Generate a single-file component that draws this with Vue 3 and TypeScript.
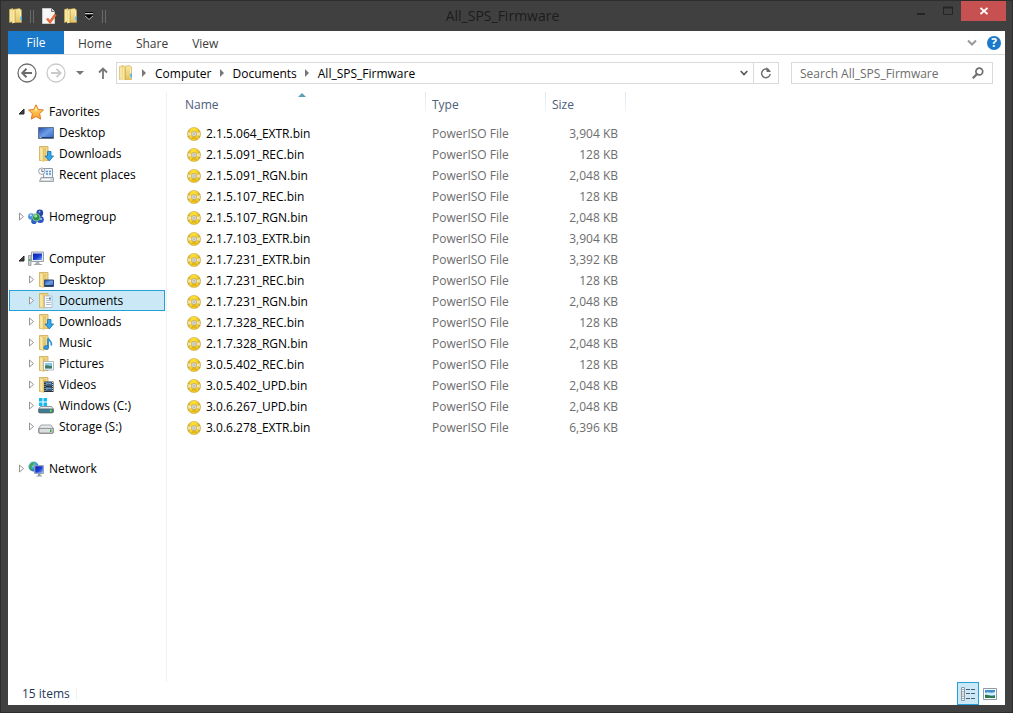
<script setup lang="ts">
import { ref } from 'vue'

interface TreeItem {
  label: string
  icon: string
  expandable?: boolean
}

interface TreeGroup extends TreeItem {
  open: boolean
  children: TreeItem[]
}

interface FileRow {
  name: string
  size: string
}

const tabs: string[] = ['Home', 'Share', 'View']
const crumbs: string[] = ['Computer', 'Documents', 'All_SPS_Firmware']

const groups = ref<TreeGroup[]>([
  {
    label: 'Favorites',
    icon: 'star',
    open: true,
    children: [
      { label: 'Desktop', icon: 'desktop' },
      { label: 'Downloads', icon: 'downloads' },
      { label: 'Recent places', icon: 'recent' },
    ],
  },
  { label: 'Homegroup', icon: 'homegroup', open: false, children: [] },
  {
    label: 'Computer',
    icon: 'computer',
    open: true,
    children: [
      { label: 'Desktop', icon: 'folder-desktop', expandable: true },
      { label: 'Documents', icon: 'documents', expandable: true },
      { label: 'Downloads', icon: 'downloads', expandable: true },
      { label: 'Music', icon: 'music', expandable: true },
      { label: 'Pictures', icon: 'pictures', expandable: true },
      { label: 'Videos', icon: 'videos', expandable: true },
      { label: 'Windows (C:)', icon: 'drive-windows', expandable: true },
      { label: 'Storage (S:)', icon: 'drive', expandable: true },
    ],
  },
  { label: 'Network', icon: 'network', open: false, children: [] },
])

const selected = ref('Documents')
const search = ref('')

const files: FileRow[] = [
  { name: '2.1.5.064_EXTR.bin', size: '3,904 KB' },
  { name: '2.1.5.091_REC.bin', size: '128 KB' },
  { name: '2.1.5.091_RGN.bin', size: '2,048 KB' },
  { name: '2.1.5.107_REC.bin', size: '128 KB' },
  { name: '2.1.5.107_RGN.bin', size: '2,048 KB' },
  { name: '2.1.7.103_EXTR.bin', size: '3,904 KB' },
  { name: '2.1.7.231_EXTR.bin', size: '3,392 KB' },
  { name: '2.1.7.231_REC.bin', size: '128 KB' },
  { name: '2.1.7.231_RGN.bin', size: '2,048 KB' },
  { name: '2.1.7.328_REC.bin', size: '128 KB' },
  { name: '2.1.7.328_RGN.bin', size: '2,048 KB' },
  { name: '3.0.5.402_REC.bin', size: '128 KB' },
  { name: '3.0.5.402_UPD.bin', size: '2,048 KB' },
  { name: '3.0.6.267_UPD.bin', size: '2,048 KB' },
  { name: '3.0.6.278_EXTR.bin', size: '6,396 KB' },
]
</script>

<template>
  <div class="window">
    <svg class="defs" width="0" height="0" aria-hidden="true">
      <defs>
        <linearGradient id="g-folder" x1="0" y1="0" x2="1" y2="0">
          <stop offset="0" stop-color="#e9cd74" />
          <stop offset="0.4" stop-color="#faeeb4" />
          <stop offset="1" stop-color="#ecd27c" />
        </linearGradient>
        <linearGradient id="g-front" x1="0" y1="0" x2="0" y2="1">
          <stop offset="0" stop-color="#f8e9a6" />
          <stop offset="1" stop-color="#e4c463" />
        </linearGradient>
        <linearGradient id="g-screen" x1="0" y1="0" x2="1" y2="1">
          <stop offset="0" stop-color="#1f49a8" />
          <stop offset="0.5" stop-color="#6d9fe6" />
          <stop offset="1" stop-color="#2a62c4" />
        </linearGradient>
        <linearGradient id="g-deep" x1="0" y1="0" x2="1" y2="1">
          <stop offset="0" stop-color="#0a1fa8" />
          <stop offset="0.55" stop-color="#1c3fd8" />
          <stop offset="1" stop-color="#7fb2f5" />
        </linearGradient>
        <linearGradient id="g-star" x1="0" y1="0" x2="0" y2="1">
          <stop offset="0" stop-color="#ffe978" />
          <stop offset="1" stop-color="#fb9a26" />
        </linearGradient>
        <linearGradient id="g-disc" x1="0" y1="0" x2="1" y2="0">
          <stop offset="0" stop-color="#b8912c" />
          <stop offset="0.22" stop-color="#f3d13a" />
          <stop offset="0.5" stop-color="#ffe22e" />
          <stop offset="0.78" stop-color="#efc92c" />
          <stop offset="1" stop-color="#b8912c" />
        </linearGradient>
        <linearGradient id="g-drive" x1="0" y1="0" x2="0" y2="1">
          <stop offset="0" stop-color="#f4f4f4" />
          <stop offset="1" stop-color="#a4a8aa" />
        </linearGradient>
        <radialGradient id="g-globe" cx="0.35" cy="0.3" r="0.8">
          <stop offset="0" stop-color="#b9e8f5" />
          <stop offset="0.5" stop-color="#3a9fd6" />
          <stop offset="1" stop-color="#135a9c" />
        </radialGradient>
      </defs>
      <symbol id="folder" viewBox="0 0 16 16">
        <path d="M1.500 1.500 5 .5v13l-3.500 1z" fill="#f6e6a0" stroke="#d0ae50" stroke-width="0.6" />
        <path d="M5 1.500 11.500.5 13.500 2v12.500H5z" fill="url(#g-front)" stroke="#c9a548" stroke-width="0.6" />
        <path d="M4 2.500 7 1.500v13L4 15.500z" fill="url(#g-folder)" />
        <path d="M7.300 2v12.500" stroke="#c9a443" stroke-width="0.7" />
        <path d="M12.500 4v9" stroke="#fbf3c8" stroke-width="1" />
        <path d="M12.200 8.500h1.600v4h-1.600z" fill="#4db2ea" />
      </symbol>
      <symbol id="folder-base" viewBox="0 0 16 16">
        <path d="M1.500 .5h8.500v14H1.500z" fill="#f0d88f" stroke="#cba955" stroke-width="0.8" />
        <path d="M1.500 .5 5.500 2v13.500l-4-1.500z" fill="url(#g-folder)" stroke="#d3b159" stroke-width="0.5" />
        <path d="M5.500 2.500 8 1.500v13L5.500 15.500z" fill="#e6c86e" />
      </symbol>
      <symbol id="star" viewBox="0 0 16 16">
        <path d="M8 .8 10.300 5.500l5.200.5-3.900 3.600 1.100 5.500L8 12.500l-4.700 2.600 1.100-5.500L.5 6l5.200-.5z" fill="url(#g-star)" stroke="#e2762a" stroke-width="1" stroke-linejoin="round" />
        <path d="M8 3.200 9.500 6.500H6.300z" fill="#fff6b0" />
      </symbol>
      <symbol id="desktop" viewBox="0 0 16 16">
        <path d="M.5 2.500h15v11H.5z" fill="url(#g-screen)" stroke="#62748f" />
        <path d="M1 12h14v1H1z" fill="#243c68" />
        <path d="M1.500 12h2v1h-2z" fill="#8ecbf5" />
      </symbol>
      <symbol id="downloads" viewBox="0 0 16 16">
        <use href="#folder-base" />
        <path d="M9.500 5.500h3.500v4.500h2.500L11.250 15 7 10h2.500z" fill="#32a7ec" stroke="#166fb3" stroke-width="0.8" />
      </symbol>
      <symbol id="recent" viewBox="0 0 16 16">
        <path d="M5.500 1.500h9v10h-9z" fill="#eef4fa" stroke="#8d9aa6" />
        <path d="M8 4.500h2M11 4.500h2M8 7h2M11 7h2" stroke="#4f90d8" stroke-width="1.500" />
        <path d="M3 10.500h12.500v4H1.500z" fill="#d5dadd" stroke="#88929b" stroke-width="0.8" />
        <path d="M4 12.500h8" stroke="#fff" />
        <circle cx="3.800" cy="4.200" r="3.200" fill="#fafcfd" stroke="#8b969f" stroke-width="0.9" />
        <path d="M3.800 2v2.500h2" fill="none" stroke="#556" stroke-width="0.8" />
      </symbol>
      <symbol id="homegroup" viewBox="0 0 16 16">
        <circle cx="3.300" cy="7.500" r="3.200" fill="#4a90e4" />
        <circle cx="11.800" cy="4" r="3.400" fill="#2446a8" />
        <circle cx="12.300" cy="10.500" r="3.500" fill="#2a55bc" />
        <circle cx="6" cy="12.300" r="2.800" fill="#2c5fc0" />
        <circle cx="8.300" cy="8.300" r="3.700" fill="#279443" stroke="#d8efe0" stroke-width="0.5" />
        <circle cx="7.700" cy="7" r="1.600" fill="#a5e39e" />
        <circle cx="2.800" cy="6.300" r="1.100" fill="#c9e4fc" />
        <circle cx="11.500" cy="2.800" r="1" fill="#8fb4f0" />
        <circle cx="13" cy="10" r="1" fill="#a9cff8" />
      </symbol>
      <symbol id="computer" viewBox="0 0 16 16">
        <path d="M.5 4.500h2.500v10H.5z" fill="#c9ced0" stroke="#8a9296" stroke-width="0.8" />
        <path d="M1 8h1.500v2H1z" fill="#39b54a" />
        <path d="M3.500 1h12v9.500h-12z" fill="#e7eaee" stroke="#98a0ab" />
        <path d="M5 2.500h9v6.500H5z" fill="url(#g-deep)" />
        <path d="M8 11h3l1 2.500H7z" fill="#abb2b7" />
        <path d="M6 13.500h8" stroke="#a1a8ac" />
      </symbol>
      <symbol id="folder-desktop" viewBox="0 0 16 16">
        <use href="#folder-base" />
        <path d="M6.500 8h9v6.500h-9z" fill="url(#g-screen)" stroke="#344c76" />
        <path d="M7 13.500h8" stroke="#233759" />
      </symbol>
      <symbol id="documents" viewBox="0 0 16 16">
        <use href="#folder-base" />
        <path d="M6.500 3h7.500v11.500H6.500z" fill="#fafcff" stroke="#a7b3c2" stroke-width="0.8" />
        <path d="M8 5.500h3M8 7.500h5M8 9.500h5M8 11.500h5" stroke="#9ba8b8" stroke-width="0.8" />
        <path d="M11 4.500h2v2h-2z" fill="#4a92dc" />
      </symbol>
      <symbol id="music" viewBox="0 0 16 16">
        <use href="#folder-base" />
        <path d="M10 4v8" stroke="#1d7cc9" stroke-width="1.600" />
        <path d="M10 3c.5 2.500 4.500 3 3.200 7.500" fill="none" stroke="#2a95df" stroke-width="1.700" />
        <ellipse cx="8.200" cy="12.500" rx="2.500" ry="2" fill="#2d9ae3" stroke="#1769ac" stroke-width="0.600" />
      </symbol>
      <symbol id="pictures" viewBox="0 0 16 16">
        <use href="#folder-base" />
        <path d="M5.500 5.500h10v8.500h-10z" fill="#fff" stroke="#9fa9b3" stroke-width="0.800" />
        <path d="M7 7h7v5.500H7z" fill="#8bc8ee" />
        <path d="M7 10c2-2 4 1 7-.5v3H7z" fill="#427b68" />
      </symbol>
      <symbol id="videos" viewBox="0 0 16 16">
        <use href="#folder-base" />
        <path d="M6 4.500h9.500V15H6z" fill="#2d333b" />
        <path d="M8 5.500h5.500v3.500H8zM8 10.500h5.500v3.500H8z" fill="#68a5d8" />
        <path d="M8 8l2-1.500 3.500 1V9H8zM8 13l3-1.500 2.500 1V14H8z" fill="#415f77" />
        <path d="M7 5v10M14.500 5v10" stroke="#d7dce0" stroke-width="0.900" stroke-dasharray="1 1" />
      </symbol>
      <symbol id="drive" viewBox="0 0 16 16">
        <path d="M3 6h10l2.500 3.500v4l-1 1h-13l-1-1v-4z" fill="url(#g-drive)" stroke="#8c9194" stroke-width="0.800" />
        <path d="M1 9.500h14v4.500H1z" fill="#dcdfe0" stroke="#85898c" stroke-width="0.800" />
        <path d="M12 10.500h1.500v2.500H12z" fill="#33a83b" />
      </symbol>
      <symbol id="drive-windows" viewBox="0 0 16 16">
        <path d="M1 0h3.500v3.500H1zM5.500 0H9v3.500H5.500zM1 4.500h3.500V8H1zM5.500 4.500H9V8H5.500z" fill="#14b9ef" />
        <path d="M2.500 8.500h11l2 2.500v3l-1 1h-13l-1-1v-3z" fill="url(#g-drive)" stroke="#727e84" stroke-width="0.800" />
        <path d="M1 11h14v3.500H1z" fill="#3b7f97" stroke="#54656d" stroke-width="0.800" />
        <path d="M12 11.500h1.500v2.500H12z" fill="#5fe05a" />
      </symbol>
      <symbol id="network" viewBox="0 0 16 16">
        <circle cx="5.500" cy="5.500" r="5" fill="url(#g-globe)" />
        <path d="M2 3.500c1-2 3-2.500 4.500-2L5.500 4 3.500 5.500 4.500 8 3 9C1 8 1 5.500 2 3.500z" fill="#3fa653" />
        <path d="M6.500 4.500h9v8h-9z" fill="#dfe4ea" stroke="#8593a8" stroke-width="0.800" />
        <path d="M7.200 5.200h7.600v6.600H7.200z" fill="url(#g-deep)" />
        <path d="M10 12.500h2.500v2H10zM8.500 14.500H14v1H8.500z" fill="#929ba3" />
      </symbol>
      <symbol id="disc" viewBox="0 0 14 14">
        <circle cx="7" cy="7" r="6.600" fill="url(#g-disc)" stroke="#c7a94e" stroke-width="0.600" />
        <path d="M7 7 .8 5v4zM7 7l6.200-2v4z" fill="#fffbe0" opacity="0.650" />
        <path d="M7 7 3.500 12.500h7z" fill="#d49f08" opacity="0.600" />
        <circle cx="7" cy="7" r="2.500" fill="#efeddf" stroke="#a89a70" stroke-width="0.700" />
        <circle cx="7" cy="7" r="1" fill="#fff" stroke="#8f8b80" stroke-width="0.600" />
      </symbol>
    </svg>

    <header class="titlebar">
      <div class="quick">
        <svg class="ic" aria-hidden="true"><use href="#folder" /></svg>
        <span class="grip"></span>
        <button type="button" class="flat" aria-label="Properties">
          <svg class="ic" viewBox="0 0 16 16">
            <path d="M1.500 .5h9l3 3v12h-12z" fill="#f8f8f8" stroke="#c9c9c9" />
            <path d="M10.500 .5v3h3" fill="#ddd" stroke="#555" stroke-width="0.800" />
            <path d="M6 10.500 9 14 14.500 6.500" fill="none" stroke="#e86a3c" stroke-width="2.600" />
          </svg>
        </button>
        <button type="button" class="flat" aria-label="New folder">
          <svg class="ic" aria-hidden="true"><use href="#folder" /></svg>
        </button>
        <button type="button" class="flat more" aria-label="Customize Quick Access Toolbar">
          <svg width="8" height="8" viewBox="0 0 8 8">
            <path d="M0 .5h8" stroke="#000" />
            <path d="M0 1.500h8" stroke="#c8c8c8" />
            <path d="M0 3h8L4 7z" fill="#000" />
            <path d="M0 4 4 7.500 8 4" fill="none" stroke="#c8c8c8" stroke-width="0.800" />
          </svg>
        </button>
        <span class="grip"></span>
      </div>
      <h1 class="title">All_SPS_Firmware</h1>
      <div class="controls">
        <button type="button" class="flat ctl" aria-label="Minimize">
          <svg width="12" height="12" viewBox="0 0 12 12"><path d="M2 8h8v2H2z" fill="#252525" /></svg>
        </button>
        <button type="button" class="flat ctl" aria-label="Maximize">
          <svg width="12" height="12" viewBox="0 0 12 12"><path d="M1.500 2.500h9v7h-9z" fill="none" stroke="#252525" /><path d="M1 2.500h10" stroke="#252525" stroke-width="2" /></svg>
        </button>
        <button type="button" class="flat close" aria-label="Close">
          <svg width="8" height="8" viewBox="0 0 8 8"><path d="M.5 1 7.500 7M7.500 1 .5 7" stroke="#fff" stroke-width="1.800" /></svg>
        </button>
      </div>
    </header>

    <div class="client">
      <nav class="ribbon" aria-label="Ribbon tabs">
        <button type="button" class="flat tab file">File</button>
        <button v-for="tab in tabs" :key="tab" type="button" class="flat tab">{{ tab }}</button>
        <div class="ribbon-end">
          <button type="button" class="flat" aria-label="Expand the Ribbon">
            <svg width="10" height="8" viewBox="0 0 10 8"><path d="M1 1.500 5 5.500 9 1.500" fill="none" stroke="#999" stroke-width="2" /></svg>
          </button>
          <button type="button" class="flat help" aria-label="Help">?</button>
        </div>
      </nav>

      <div class="navbar">
        <button type="button" class="flat" aria-label="Back">
          <svg width="20" height="20" viewBox="0 0 20 20" fill="none" stroke="#6d6d6d">
            <circle cx="10" cy="10" r="9" stroke-width="1.300" />
            <path d="M5.500 10H15M9.500 5.800 5.300 10l4.200 4.200" stroke-width="2" />
          </svg>
        </button>
        <button type="button" class="flat forward" aria-label="Forward" disabled>
          <svg width="20" height="20" viewBox="0 0 20 20" fill="none" stroke="#cacaca">
            <circle cx="10" cy="10" r="9" stroke-width="1.300" />
            <path d="M5 10h9.500M10.500 5.800l4.200 4.200-4.200 4.200" stroke-width="1.800" />
          </svg>
        </button>
        <button type="button" class="flat recents" aria-label="Recent locations">
          <svg width="8" height="4" viewBox="0 0 8 4"><path d="M0 0h8L4 4z" fill="#777" /></svg>
        </button>
        <button type="button" class="flat up" aria-label="Up">
          <svg width="10" height="12" viewBox="0 0 10 12"><path d="M5 12V1.500M1 5.500 5 1.500l4 4" fill="none" stroke="#777" stroke-width="1.800" /></svg>
        </button>

        <div class="address">
          <svg class="ic" aria-hidden="true"><use href="#folder" /></svg>
          <template v-for="crumb in crumbs" :key="crumb">
            <svg class="sep" width="4" height="8" viewBox="0 0 4 8" aria-hidden="true"><path d="M0 0v8l4-4z" fill="#777" /></svg>
            <button type="button" class="flat">{{ crumb }}</button>
          </template>
          <button type="button" class="flat drop" aria-label="Previous locations">
            <svg width="8" height="6" viewBox="0 0 8 6"><path d="M.7 1 4 4.500 7.300 1" fill="none" stroke="#555" stroke-width="1.600" /></svg>
          </button>
          <button type="button" class="flat refresh" aria-label="Refresh">
            <svg width="12" height="12" viewBox="0 0 12 12"><path d="M9.500 4A4.300 4.300 0 1 0 10.200 7" fill="none" stroke="#6d6d6d" stroke-width="1.500" /><path d="M6.500 0v5h4.500z" fill="#6d6d6d" /></svg>
          </button>
        </div>

        <label class="search">
          <input v-model="search" type="text" placeholder="Search All_SPS_Firmware" aria-label="Search All_SPS_Firmware" />
          <svg width="12" height="12" viewBox="0 0 12 12" fill="none" stroke="#6d6d6d" aria-hidden="true"><circle cx="7.300" cy="4.500" r="3.400" stroke-width="1.700" /><path d="M5 7 .8 11.200" stroke-width="2.200" /></svg>
        </label>
      </div>

      <div class="body">
        <nav class="tree" aria-label="Navigation pane">
          <ul>
            <li v-for="group in groups" :key="group.label" class="group">
              <div class="node">
                <button type="button" class="flat arrow" :aria-label="'Toggle ' + group.label" @click="group.open = !group.open">
                  <svg v-if="group.open" width="7" height="7" viewBox="0 0 7 7"><path d="M6 1v5H1z" fill="#404040" stroke="#262626" /></svg>
                  <svg v-else width="7" height="9" viewBox="0 0 7 9"><path d="M1.500 1v7l4-3.500z" fill="#fff" stroke="#959595" /></svg>
                </button>
                <svg class="ic" aria-hidden="true"><use :href="'#' + group.icon" /></svg>
                <a href="#">{{ group.label }}</a>
              </div>
              <ul v-if="group.open && group.children.length">
                <li v-for="item in group.children" :key="item.label" class="node child" :class="{ selected: item.expandable && item.label === selected }">
                  <button v-if="item.expandable" type="button" class="flat arrow" :aria-label="'Expand ' + item.label">
                    <svg width="7" height="9" viewBox="0 0 7 9"><path d="M1.500 1v7l4-3.500z" fill="#fff" stroke="#959595" /></svg>
                  </button>
                  <span v-else class="arrow"></span>
                  <svg class="ic" aria-hidden="true"><use :href="'#' + item.icon" /></svg>
                  <a href="#" @click.prevent="selected = item.label">{{ item.label }}</a>
                </li>
              </ul>
            </li>
          </ul>
        </nav>

        <main class="content">
          <table>
            <thead>
              <tr>
                <th class="col-name" scope="col" aria-sort="ascending">
                  Name
                  <svg class="sort" width="8" height="4" viewBox="0 0 8 4" aria-hidden="true"><path d="M4 0 8 4H0z" fill="#5f9dbd" /></svg>
                </th>
                <th class="col-type" scope="col">Type</th>
                <th class="col-size" scope="col">Size</th>
              </tr>
            </thead>
            <tbody>
              <tr v-for="file in files" :key="file.name">
                <td>
                  <div class="name">
                    <svg width="14" height="14" aria-hidden="true"><use href="#disc" /></svg>
                    <span>{{ file.name }}</span>
                  </div>
                </td>
                <td class="muted">PowerISO File</td>
                <td class="muted size">{{ file.size }}</td>
              </tr>
            </tbody>
          </table>
        </main>
      </div>

      <footer class="status">
        <span class="count">{{ files.length }} items</span>
        <div class="views">
          <button type="button" class="flat view active" aria-label="Details view" aria-pressed="true">
            <svg width="16" height="14" viewBox="0 0 16 14">
              <path d="M1.500 .5h3v13h-3zM1.500 4.800h3M1.500 9.200h3" fill="#fff" stroke="#8b98a6" />
              <path d="M2.500 2.500h1M2.500 11.500h1" stroke="#3b5a8c" />
              <path d="M2.500 7h1" stroke="#c0392b" />
              <path d="M6 2.500h4M11 2.500h4M6 6.500h4M11 6.500h4M6 11.500h4M11 11.500h4" stroke="#4c5f75" />
            </svg>
          </button>
          <button type="button" class="flat view" aria-label="Large thumbnails view">
            <svg width="14" height="12" viewBox="0 0 14 12">
              <path d="M.5 .5h13v11H.5z" fill="#fff" stroke="#8d9bab" />
              <path d="M2 2h10v8H2z" fill="#3f8fd2" />
              <path d="M2 5c3-2 5 1 10-1v3c-4 1-6 0-10 1z" fill="#d4eef8" />
              <path d="M2 7c3-1 5 2 10 1v2H2z" fill="#2a7a4a" />
            </svg>
          </button>
        </div>
      </footer>
    </div>
  </div>
</template>

<style>
html,
body {
  margin: 0;
  background: #404040;
}
</style>

<style scoped>
.window {
  box-sizing: border-box;
  display: flex;
  flex-direction: column;
  min-height: 100vh;
  padding: 0 7px 7px;
  border: 1px solid #2d2d2d;
  background: #404040;
  color: #000;
  font: 12px/21px "Open Sans", "Noto Sans", sans-serif;
}

.defs {
  position: absolute;
}

.flat {
  display: flex;
  align-items: center;
  justify-content: center;
  padding: 0;
  border: 0;
  background: none;
  color: inherit;
  font: inherit;
}

svg {
  display: block;
  flex: none;
}

.ic {
  width: 16px;
  height: 16px;
}

.titlebar {
  display: grid;
  grid-template-columns: 1fr auto 1fr;
  height: 30px;
}

.quick {
  display: flex;
  align-items: center;
  gap: 6px;
}

.grip {
  box-sizing: border-box;
  width: 4px;
  height: 13px;
  margin-right: 1px;
  border: solid #6a6a6a;
  border-width: 0 1px;
}

.more {
  margin-right: 3px;
}

.title {
  margin: 0;
  padding-right: 8px;
  color: #1c1c1c;
  font-size: 14px;
  font-weight: 400;
  line-height: 30px;
}

.controls {
  display: flex;
  align-items: flex-start;
  justify-content: flex-end;
}

.ctl {
  width: 27px;
  height: 20px;
}

.close {
  width: 45px;
  height: 20px;
  margin-right: -1px;
  background: #c75050;
}

.client {
  display: flex;
  flex: 1;
  flex-direction: column;
  background: #fff;
}

.ribbon {
  display: flex;
  height: 23px;
  border-bottom: 1px solid #dadbdc;
}

.tab {
  padding: 2px 12px 0;
  color: #3b3b3b;
}

.file {
  width: 56px;
  margin-right: 2px;
  padding-top: 0;
  background: #1979ca;
  color: #fff;
}

.ribbon-end {
  display: flex;
  align-items: center;
  gap: 10px;
  margin-left: auto;
  padding-right: 4px;
}

.help {
  width: 14px;
  height: 14px;
  border-radius: 50%;
  background: #1979ca;
  color: #fff;
  font-size: 12px;
  font-weight: 700;
  line-height: 14px;
}

.navbar {
  display: flex;
  align-items: center;
  height: 36px;
  padding: 0 12px 0 9px;
}

.forward {
  margin-left: 9px;
}

.recents {
  margin-left: 10px;
}

.up {
  margin-left: 14px;
}

.address,
.search {
  box-sizing: border-box;
  display: flex;
  align-items: center;
  height: 22px;
  border: 1px solid #d9d9d9;
}

.address {
  flex: 1;
  margin: 0 12px 0 8px;
  padding-left: 1px;
}

.sep {
  margin: 0 9px 0 8px;
}

.drop {
  width: 18px;
  margin-left: auto;
}

.refresh {
  width: 25px;
  height: 20px;
  border-left: 1px solid #d9d9d9;
}

.search {
  width: 202px;
  padding: 0 8px;
}

.search input {
  flex: 1;
  min-width: 0;
  padding: 0;
  border: 0;
  outline: 0;
  background: none;
  color: #000;
  font: inherit;
}

.search input::placeholder {
  color: #6d6d6d;
  opacity: 1;
}

.body {
  display: flex;
  flex: 1;
  padding-top: 1px;
}

.tree {
  box-sizing: border-box;
  width: 159px;
  padding: 9px 1px 0;
  border-right: 1px solid #f0f0f0;
}

.tree ul {
  margin: 0;
  padding: 0;
  list-style: none;
}

.group {
  margin-bottom: 21px;
}

.node {
  box-sizing: border-box;
  display: flex;
  align-items: center;
  height: 21px;
  padding-left: 9px;
}

.child {
  padding-left: 19px;
}

.selected {
  padding-left: 18px;
  border: 1px solid #26a0da;
  background: #cbe8f6;
}

.arrow {
  width: 7px;
  margin-right: 3px;
}

.node a {
  margin-left: 5px;
  color: #000;
  text-decoration: none;
  white-space: nowrap;
}

.content {
  flex: 1;
}

table {
  width: 459px;
  border-collapse: collapse;
  table-layout: fixed;
}

th {
  position: relative;
  height: 21px;
  padding: 2px 0 8px 6px;
  background: linear-gradient(#d9e4f0, #f4f7fb) right top / 1px 20px no-repeat;
  color: #4c607a;
  font-weight: 400;
  line-height: 21px;
  text-align: left;
}

.col-name {
  width: 241px;
  padding-left: 18px;
}

.col-type {
  width: 114px;
}

.sort {
  position: absolute;
  top: 1px;
  left: 131px;
}

td {
  height: 21px;
  padding: 0 0 0 6px;
}

.name {
  display: flex;
  align-items: center;
  gap: 5px;
  padding-left: 14px;
}

.muted {
  color: #6d6d6d;
}

.size {
  padding-right: 8px;
  text-align: right;
}

.status {
  display: flex;
  align-items: center;
  height: 23px;
  padding: 0 4px 0 14px;
  color: #1e395b;
}

.count {
  padding-right: 6px;
  border-right: 1px solid #f0f0f0;
  line-height: 12px;
}

.views {
  display: flex;
  margin-left: auto;
}

.view {
  box-sizing: border-box;
  width: 22px;
  height: 23px;
}

.active {
  border: 1px solid #26a0da;
  background: #cbe8f6;
}
</style>
